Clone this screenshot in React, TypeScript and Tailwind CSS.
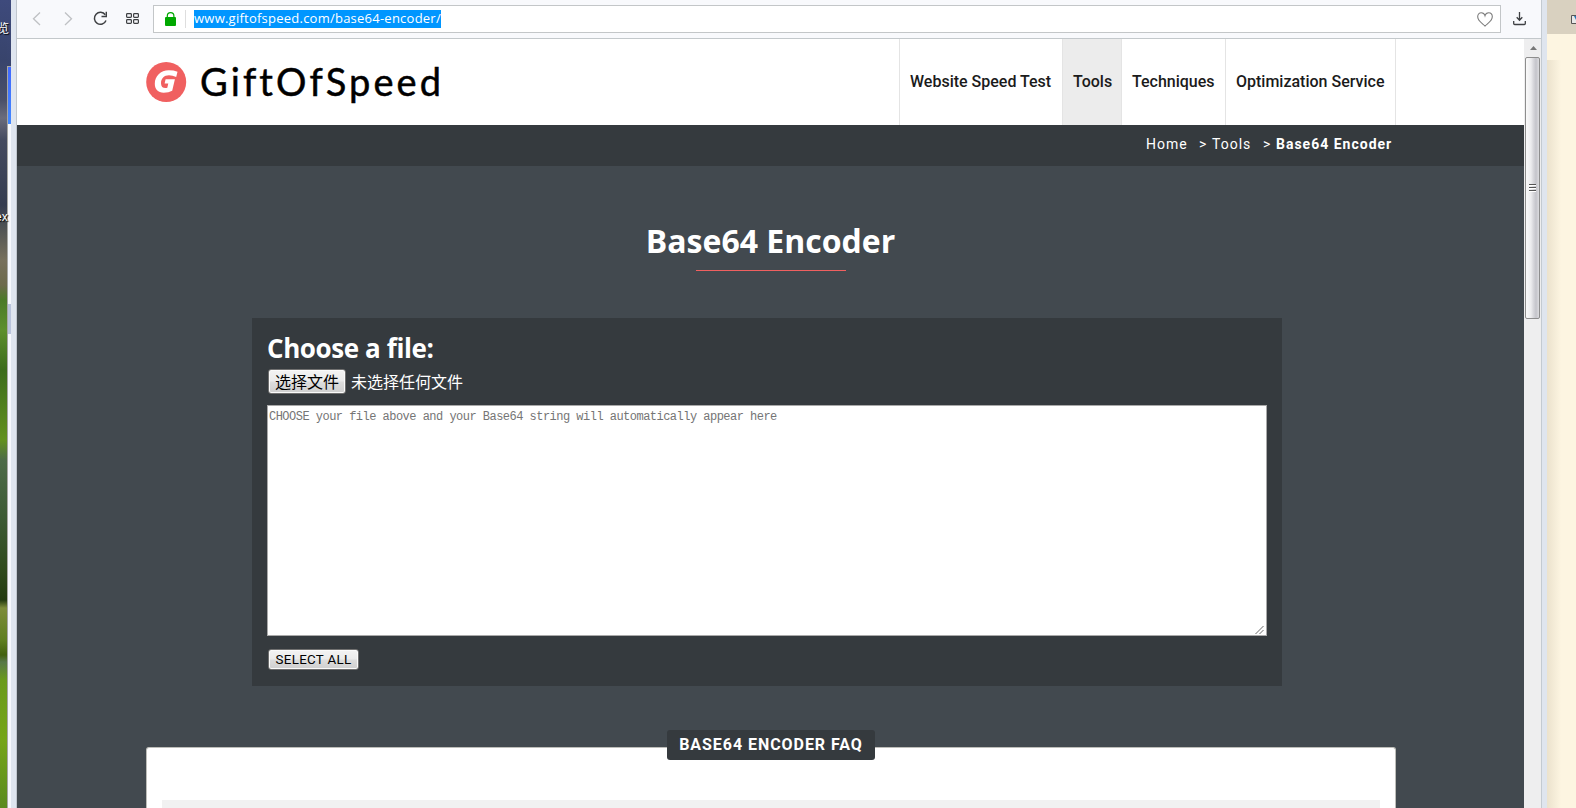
import type { ReactNode } from 'react';

function NavItem({ children, active = false }: { children: ReactNode; active?: boolean }) {
  return (
    <a
      className={
        'flex h-full shrink-0 items-center whitespace-nowrap border-l border-[#e4e4e4] pl-[10px] text-[16px] font-medium text-[#1b1b1b] ' +
        (active ? 'bg-[#ececec]' : 'bg-white')
      }
    >
      {children}
    </a>
  );
}

function Desktop() {
  return (
    <div className="relative h-full w-[7px] shrink-0 bg-[linear-gradient(180deg,#3e4a7c_0px,#38446c_60px,#4a5068_100px,#6a6c7c_118px,#444a60_140px,#343c50_205px,#4c5054_225px,#77705c_260px,#6d6a4c_285px,#4b7a28_300px,#5d8f2c_330px,#3c6c1c_370px,#62911f_440px,#4d6b48_460px,#3c5a34_520px,#2f4a1c_570px,#233a10_600px,#7d8c3a_608px,#5f7f20_640px,#42600f_655px,#587848_662px,#6a9a1c_680px,#75a518_740px,#5a8a20_808px)]">
      <span className="absolute -left-[3px] top-[20px] z-10 font-['Noto_Sans_CJK_SC',sans-serif] text-[12px] leading-[16px] text-white [text-shadow:1px_1px_1px_#000]">览</span>
      <span className="absolute -left-[5px] top-[210px] font-['Liberation_Sans',sans-serif] text-[12px] leading-[14px] text-white [text-shadow:1px_1px_1px_#000]">ex</span>
    </div>
  );
}

function Toolbar() {
  return (
    <div className="flex h-[39px] shrink-0 items-start border-b border-[#c3c8cb] bg-[#f8f9fc]">
      <svg width="136" height="38" viewBox="17 0 136 38" fill="none" className="shrink-0">
        <path d="M40 12.500 33.500 18.700 40 25M65 12.500l6.500 6.200L65 25" stroke="#bfc1c4" strokeWidth="1.300" />
        <path d="M105.300 14.800A6 6 0 1 0 106 20.500" stroke="#3e4043" strokeWidth="1.500" />
        <path d="M106.300 11.800v4.700h-4.800" stroke="#3e4043" strokeWidth="1.400" />
        <g stroke="#3e4043" strokeWidth="1.200">
          <rect x="126.600" y="13.600" width="4.800" height="3.800" rx=".8" />
          <rect x="133.600" y="13.600" width="4.800" height="3.800" rx=".8" />
          <rect x="126.600" y="19.600" width="4.800" height="3.800" rx=".8" />
          <rect x="133.600" y="19.600" width="4.800" height="3.800" rx=".8" />
        </g>
      </svg>
      <div className="mt-[5px] flex h-[28px] w-[1348px] shrink-0 items-center border border-[#c3c6c8] bg-white">
        <svg width="40" height="26" viewBox="154 6 40 26" fill="none" className="shrink-0">
          <path d="M167.300 18v-2a3.300 3.300 0 0 1 6.600 0v2" stroke="#00a800" strokeWidth="1.200" />
          <rect x="165" y="17" width="11" height="9" rx="1" fill="#00a800" />
          <path d="M185.500 10v18" stroke="#dedede" />
        </svg>
        <div className="flex h-[18px] w-[247px] items-center overflow-visible whitespace-nowrap bg-[#0096ff] font-['Open_Sans',sans-serif] text-[13px] font-medium tracking-[0.240px] text-white">
          www.giftofspeed.com/base64-encoder/
        </div>
        <svg className="ml-auto mr-[7px] mt-px" width="16" height="15" viewBox="0 0 16 15" fill="none">
          <path d="M8 14C5.500 11.500.7 9 .7 4.800.7 2.300 2.300.7 4.300.7 6 .7 7.500 1.900 8 3.700 8.500 1.900 10 .7 11.700.7c2 0 3.600 1.600 3.600 4.100C15.300 9 10.500 11.500 8 14Z" stroke="#7c7c7c" strokeWidth="1.100" />
        </svg>
      </div>
      <svg className="ml-[12px] mt-[11px]" width="14" height="15" viewBox="0 0 14 15" fill="none" stroke="#3e4043" strokeWidth="1.300">
        <path d="M6.500 1v8M3.700 6.300l2.800 2.900 2.800-2.900M.7 10v2.500q0 1 1 1h9.600q1 0 1-1V10" />
      </svg>
    </div>
  );
}

function Scrollbar() {
  return (
    <div className="flex w-[17px] shrink-0 flex-col bg-[#eeeeef] pl-px">
      <div className="flex h-[18px] items-center justify-center">
        <svg width="7" height="4" viewBox="0 0 7 4"><path d="M0 4 3.500 0 7 4Z" fill="#777" /></svg>
      </div>
      <div className="flex h-[262px] w-[15px] flex-col items-center justify-center gap-px rounded-[2px] border border-[#8d8d8d] bg-[linear-gradient(90deg,#fafafa_0px,#ececee_5px,#dadade_7px,#c4c4ca_10px,#dcdcdf_13px)]">
        <i className="h-[2px] w-[7px] border-b border-white bg-[#555]" />
        <i className="h-[2px] w-[7px] border-b border-white bg-[#555]" />
        <i className="h-[2px] w-[7px] border-b border-white bg-[#555]" />
      </div>
    </div>
  );
}

function Header() {
  return (
    <header className="flex h-[86px] shrink-0 items-stretch bg-white pl-[129px]">
      <div className="flex w-[753px] items-center">
        <svg width="41" height="41" viewBox="0 0 41 41" className="shrink-0">
          <circle cx="20.200" cy="20" r="20" fill="#f06060" />
          <path d="M31.500 9.700 30.200 15Q26.500 13.300 23 13.300C18 13.300 15 16.800 15 21.200c0 3.200 1.600 4.900 4.400 4.900.7 0 1.300-.1 1.900-.3l1-4.300h-3.700l1-4.300h9.300L26.200 28.700Q22.800 30.700 17.700 30.700C12 30.700 8.800 27.200 8.800 21.800 8.800 14.200 14.500 8.300 22.800 8.300q5 0 8.700 1.400Z" fill="#fff" />
        </svg>
        <span className="ml-[13px] whitespace-nowrap pb-[2px] font-['Lato',sans-serif] text-[38px] leading-[50px] tracking-[3.100px] text-black [-webkit-text-stroke:0.500px_#000]">GiftOfSpeed</span>
      </div>
      <nav className="flex w-[497px] shrink-0 border-r border-[#e4e4e4]">
        <div className="w-[163px]"><NavItem>Website Speed Test</NavItem></div>
        <div className="w-[59px]"><NavItem active>Tools</NavItem></div>
        <div className="w-[104px]"><NavItem>Techniques</NavItem></div>
        <div className="w-[170px]"><NavItem>Optimization Service</NavItem></div>
      </nav>
    </header>
  );
}

function EncoderPanel() {
  const button =
    'flex items-center justify-center whitespace-nowrap rounded-[3px] border border-[#707070] bg-[linear-gradient(180deg,#f3f3f3_0%,#ebebeb_48%,#dddddd_52%,#cfcfcf_100%)] text-black shadow-[inset_0_0_0_1px_#fafafa]';
  return (
    <section className="ml-[235px] mt-[47px] h-[368px] w-[1030px] shrink-0 bg-[#353a3e] pl-[15px]">
      <h2 className="pt-[12px] font-['Open_Sans',sans-serif] text-[26px] font-bold leading-[36px] tracking-[-0.400px] text-white">Choose a file:</h2>
      <div className="mt-[3px] flex h-[25px] items-center font-['Noto_Sans_CJK_SC',sans-serif] text-[16px] leading-[24px] text-white">
        <button className={button + ' ml-px h-[25px] w-[78px] pb-[2px]'}>选择文件</button>
        <span className="ml-[5px] pb-[2px]">未选择任何文件</span>
      </div>
      <div className="mt-[11px] flex h-[231px] w-[1000px] items-start justify-between border border-[#a9a9a9] bg-white pl-px">
        <span className="mt-[3px] whitespace-nowrap font-['Liberation_Mono',monospace] text-[12px] leading-[16px] tracking-[-0.520px] text-[#757575]">
          CHOOSE your file above and your Base64 string will automatically appear here
        </span>
        <svg className="mr-px self-end" width="10" height="10" viewBox="0 0 10 10" stroke="#444" strokeWidth=".8">
          <path d="M.5 9 8.500 1M4.500 9l4-4" />
        </svg>
      </div>
      <button className={button + ' ml-px mt-[13px] h-[21px] w-[91px] text-[13.333px] tracking-[0.300px]'}>SELECT ALL</button>
    </section>
  );
}

export default function App() {
  return (
    <div className="flex h-[808px] w-[1576px] overflow-hidden bg-[#fdf5e1] font-['Roboto',sans-serif]">
      <Desktop />
      <div className="flex w-[4px] shrink-0 flex-col bg-[#f6f8fd]">
        <div className="h-[66px] bg-[linear-gradient(180deg,#3e4a7c,#38446c)]" />
        <div className="flex-1 border-l border-[#a8a8a5]">
          <div className="h-[58px] border-t border-[#a8a8a5] bg-[linear-gradient(180deg,#4169ff,#4288ff)]" />
          <div className="mt-[180px] h-[30px] bg-[#bac4dc]" />
        </div>
      </div>
      <div className="w-[6px] shrink-0 border-r border-[#c0c6ce] bg-[#dfe5ef]" />
      <div className="flex w-[1525px] shrink-0 flex-col border-r border-[#c3cad1]">
        <Toolbar />
        <div className="flex min-h-0 flex-1">
          <main className="flex w-[1507px] shrink-0 flex-col overflow-hidden bg-[#42494f]">
            <Header />
            <div className="flex h-[41px] shrink-0 items-start bg-[#353a3e] pl-[1129px] pt-[9px] text-[14px] leading-[20px] tracking-[1px] text-white">
              <span className="w-[53px]">Home</span>
              <span className="w-[13px]">&gt;</span>
              <span className="w-[51px]">Tools</span>
              <span className="w-[13px]">&gt;</span>
              <b className="whitespace-nowrap font-bold">Base64 Encoder</b>
            </div>
            <div className="mt-[52px] flex shrink-0 flex-col items-center">
              <h1 className="font-['Open_Sans',sans-serif] text-[32px] font-bold leading-[46px] text-white">Base64 Encoder</h1>
              <div className="mt-[6px] h-px w-[150px] bg-[#f06060]" />
            </div>
            <EncoderPanel />
            <div className="relative mt-[61px] ml-[129px] h-[61px] w-[1250px] shrink-0 rounded-t-[3px] border border-b-0 border-[#bdbdb9] bg-white px-[15px] pt-[52px]">
              <div className="absolute -top-[18px] left-[520px] flex h-[30px] w-[208px] items-center justify-center whitespace-nowrap rounded-[3px] bg-[#353a3e] text-[16px] font-bold tracking-[0.950px] text-white">
                BASE64 ENCODER FAQ
              </div>
              <div className="h-[8px] bg-[#f1f1f1]" />
            </div>
          </main>
          <Scrollbar />
        </div>
      </div>
      <div className="w-[5px] shrink-0 bg-[#dfe5ee]" />
      <aside className="flex min-w-0 flex-1 flex-col bg-[#fdf5e1]">
        <div className="flex h-[34px] items-start justify-end overflow-hidden bg-[#d9d1c0]">
          <svg width="5" height="9" viewBox="0 0 5 9" className="mt-[15px]">
            <path d="M5 .5H.5v8H5" fill="#e8e8e8" stroke="#555" />
            <path d="M3 1h2v4z" fill="#2878b4" />
          </svg>
        </div>
        <div className="mt-[26px] flex-1 bg-[linear-gradient(90deg,#ebe2cd_0px,#fdf5e1_14px)]" />
      </aside>
    </div>
  );
}
